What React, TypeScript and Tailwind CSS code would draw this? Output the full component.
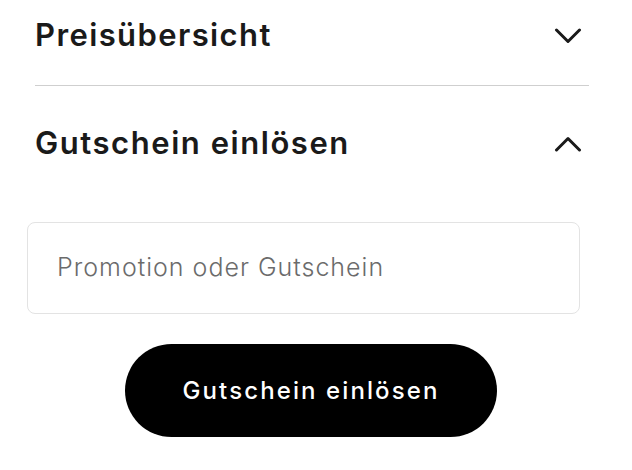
import React from "react";

function Chevron({ up }: { up?: boolean }) {
  return (
    <svg width="28" height="16" viewBox="0 0 28 16" fill="none" className="block">
      <polyline
        points={up ? "2.5,14 14,2.5 25.5,14" : "2.5,2 14,13.5 25.5,2"}
        stroke="#1a1a1a"
        strokeWidth="3"
        strokeLinecap="round"
        strokeLinejoin="round"
      />
    </svg>
  );
}

export default function App() {
  const font = { fontFamily: "Inter, 'Noto Sans', sans-serif" };
  return (
    <div className="w-[632px] h-[470px] bg-white overflow-hidden" style={font}>
      <div className="pl-[35px] pr-[43px]">
        <div className="h-[86px] flex items-center justify-between border-b border-[#cfcfcf]">
          <span className="text-[31px] font-semibold text-[#1a1a1a] leading-none tracking-[1.4px] -mt-[16px]">Preisübersicht</span>
          <span className="mr-[7px] -mt-[14px]"><Chevron /></span>
        </div>
        <div className="h-[114px] flex items-center justify-between">
          <span className="text-[31px] font-semibold text-[#1a1a1a] leading-none tracking-[1.55px] -mt-[1px]">Gutschein einlösen</span>
          <span className="mr-[7px] mt-[2px]"><Chevron up /></span>
        </div>
      </div>
      <div className="ml-[27px] mr-[52px] mt-[22px] h-[92px] rounded-[8px] border border-[#e3e3e3] flex items-center pl-[29px]">
        <span className="text-[25px] font-light text-[#6b6b6b] tracking-[1px]">Promotion oder Gutschein</span>
      </div>
      <div className="flex justify-center mt-[30px] pr-[10px]">
        <button className="w-[372px] h-[93px] rounded-full bg-black text-white text-[24px] font-medium tracking-[2.1px]">
          Gutschein einlösen
        </button>
      </div>
    </div>
  );
}
